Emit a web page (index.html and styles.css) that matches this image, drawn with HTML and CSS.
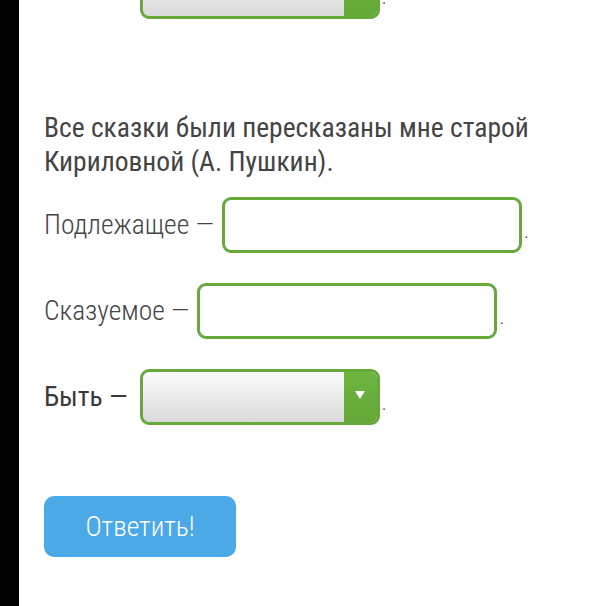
FILE: index.html
```html
<!DOCTYPE html>
<html lang="ru">
<head>
<meta charset="UTF-8">
<title>Задание</title>
<link rel="stylesheet" href="styles.css">
</head>
<body>
<div class="edge"></div>
<div class="task">
  <div class="row">
    <span class="label strong">Быть —</span>
    <div class="select"><span class="select-arrow"></span></div>
    <span class="dot">.</span>
  </div>

  <p class="sentence">Все сказки были пересказаны мне старой Кириловной (А. Пушкин).</p>

  <div class="row first">
    <span class="label">Подлежащее —</span>
    <input type="text" class="field">
    <span class="dot">.</span>
  </div>
  <div class="row">
    <span class="label">Сказуемое —</span>
    <input type="text" class="field">
    <span class="dot">.</span>
  </div>
  <div class="row">
    <span class="label strong">Быть —</span>
    <div class="select"><span class="select-arrow"></span></div>
    <span class="dot">.</span>
  </div>

  <button class="answer">Ответить!</button>
</div>
</body>
</html>
```

FILE: styles.css
```css
html, body { height: 100%; }
body { margin: 0; display: flex; background: #fff; color: #444;
       font-family: Roboto, "Noto Sans", sans-serif; font-stretch: 80%; overflow: hidden; }
.edge { width: 19px; flex: none; background: #000; }
.task { flex: 1; padding-left: 25px; margin-top: -37px; display: flex; flex-direction: column;
        align-items: flex-start; }

.row { display: flex; align-items: center; height: 56px; margin-bottom: 30px; }
.row.first { margin-top: 18px; }
.label { font-size: 27.5px; font-weight: 300; line-height: 34px; margin-right: 8px; white-space: nowrap; }
.label.strong { font-weight: 400; color: #3a3a3a; margin-right: 12px; }
.dot { font-size: 20px; font-weight: 300; line-height: 34px; margin: 12px 0 0 2px; }

.field { box-sizing: border-box; width: 300px; height: 56px; border: 3px solid #67a93a; border-radius: 9px;
         background: #fff; outline: none; padding: 0 10px; font: 26px Roboto, sans-serif; }

.select { box-sizing: border-box; width: 240px; height: 56px; border: 3px solid #67a93a; border-radius: 9px;
          background: linear-gradient(#fbfbfb, #d9d9d9); display: flex; justify-content: flex-end; overflow: hidden; }
.select-arrow { width: 33px; background: linear-gradient(#6fb541, #64a838); display: flex;
                align-items: center; justify-content: center; }
.select-arrow::after { content: ""; border-left: 5px solid transparent; border-right: 5px solid transparent;
                       border-top: 8px solid #fff; margin-bottom: 4px; }

.sentence { font-size: 27.5px; line-height: 34px; margin: 62px 0 0; width: 520px; }

.answer { margin-top: 41px; width: 192px; height: 61px; border: none; border-radius: 10px;
          background: #4ba9e8; color: #fff; font-family: Roboto, sans-serif; font-stretch: 80%;
          font-size: 27.5px; font-weight: 300; cursor: pointer; }
```
